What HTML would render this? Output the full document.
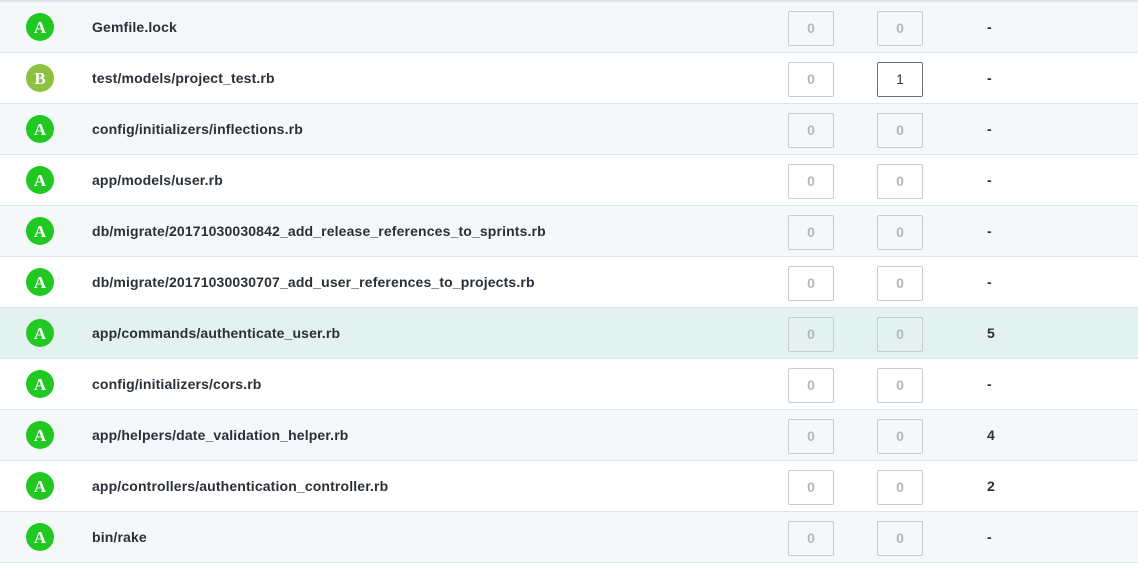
<!DOCTYPE html>
<html><head><style>
body{margin:0;width:1138px;height:565px;background:#fff;font-family:"Liberation Sans",sans-serif;overflow:hidden}
.top{height:2px;background:#dfe6ea}
.row{height:50px;border-bottom:1px solid #dde6ea;position:relative;background:#fff}
.row.o{background:#f4f8f9}
.row.h{background:#e3f1ef}
.c{position:absolute;left:26px;top:11px;width:28px;height:28px;border-radius:50%;background:#22c822;color:#fff;font:bold 17px "Liberation Serif",serif;text-align:center;line-height:29px}
.c.b{background:#8cc23e}
.n{position:absolute;left:92px;top:17px;font-weight:bold;font-size:14px;letter-spacing:0.14px;color:#2b2f38}
.bx{position:absolute;top:9px;width:44px;height:33px;border:1px solid #c9cccf;border-radius:2px;font-size:14px;color:#b5b8bb;text-align:center;line-height:33px;font-weight:bold}
.b1{left:788px}.b2{left:877px}
.bx.d{border-color:#6b6f74;color:#333;font-weight:normal}
.v{position:absolute;left:987px;top:17px;font-weight:bold;font-size:14px;color:#2b2f38}
</style></head><body>
<div class="top"></div>
<div class="row o"><div class="c">A</div><div class="n">Gemfile.lock</div><div class="bx b1">0</div><div class="bx b2">0</div><div class="v">-</div></div>
<div class="row"><div class="c b">B</div><div class="n">test/models/project_test.rb</div><div class="bx b1">0</div><div class="bx b2 d">1</div><div class="v">-</div></div>
<div class="row o"><div class="c">A</div><div class="n">config/initializers/inflections.rb</div><div class="bx b1">0</div><div class="bx b2">0</div><div class="v">-</div></div>
<div class="row"><div class="c">A</div><div class="n">app/models/user.rb</div><div class="bx b1">0</div><div class="bx b2">0</div><div class="v">-</div></div>
<div class="row o"><div class="c">A</div><div class="n">db/migrate/20171030030842_add_release_references_to_sprints.rb</div><div class="bx b1">0</div><div class="bx b2">0</div><div class="v">-</div></div>
<div class="row"><div class="c">A</div><div class="n">db/migrate/20171030030707_add_user_references_to_projects.rb</div><div class="bx b1">0</div><div class="bx b2">0</div><div class="v">-</div></div>
<div class="row h"><div class="c">A</div><div class="n">app/commands/authenticate_user.rb</div><div class="bx b1">0</div><div class="bx b2">0</div><div class="v">5</div></div>
<div class="row"><div class="c">A</div><div class="n">config/initializers/cors.rb</div><div class="bx b1">0</div><div class="bx b2">0</div><div class="v">-</div></div>
<div class="row o"><div class="c">A</div><div class="n">app/helpers/date_validation_helper.rb</div><div class="bx b1">0</div><div class="bx b2">0</div><div class="v">4</div></div>
<div class="row"><div class="c">A</div><div class="n">app/controllers/authentication_controller.rb</div><div class="bx b1">0</div><div class="bx b2">0</div><div class="v">2</div></div>
<div class="row o"><div class="c">A</div><div class="n">bin/rake</div><div class="bx b1">0</div><div class="bx b2">0</div><div class="v">-</div></div>
</body></html>
